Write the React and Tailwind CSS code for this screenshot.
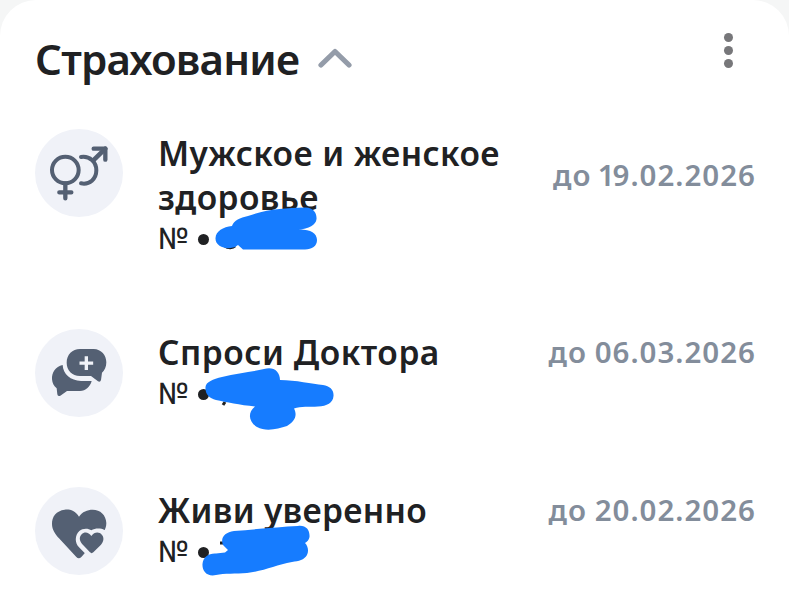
import React from "react";

function GenderIcon() {
  return (
    <svg viewBox="30 27 264 264" className="block size-[88px]" fill="none" stroke="#546073" strokeWidth="12" strokeLinecap="round" strokeLinejoin="round">
      <circle cx="121" cy="150" r="40" />
      <path d="M121 190V235M103 217H139" strokeWidth="13" />
      <path d="M168 111C194 107 214 126 214 151C214 177 194 195 168 190" />
      <path d="M205 121L241 86" strokeWidth="14" />
      <path d="M206 86H241V119" strokeWidth="13" />
    </svg>
  );
}

function ChatIcon() {
  return (
    <svg viewBox="30 27 264 264" className="block size-[88px]">
      <path d="M113 135C91 140 80 158 81 178C82 190 87 199 95 205L97 223Q98 231 106 227L126 213H165C182 213 196 199 200 183H168C137 182 114 162 113 135Z" fill="#546073" />
      <path d="M165 87H206C229 88 244 105 244 127C244 141 239 151 231 158L228 180Q226 187 219 184L198 168H165C141 168 125 150 125 128C125 104 142 87 165 87Z" fill="#546073" />
      <path d="M184 109V150M163.500 129.500H204.500" stroke="#f0f2f8" strokeWidth="10" />
    </svg>
  );
}

function HeartsIcon() {
  return (
    <svg viewBox="30 30 264 264" className="block size-[88px]">
      <path d="M162 119C150 100 133 96 119 98C94 101 80 119 81 141C81 157 90 171 102 184L154 240Q161 248 169 240L175 233L235 165C241 157 244 148 244 138C243 114 226 98 203 98C187 98 172 104 162 119Z" fill="#546073" />
      <path d="M199 160C190 153 173 153 163 162C149 176 149 197 162 211L182 231L199 247L244 208L256 159H238C228 153 210 153 199 160Z" fill="#f0f2f8" />
      <path d="M199 177C191 165 178 163 170 172C161 181 164 193 172 202L195 226Q200 231 205 226L228 203C236 194 238 182 231 174C222 163 208 165 199 177Z" fill="#546073" />
    </svg>
  );
}

const items = [
  {
    title: (
      <>
        <span className="block tracking-[0.420px]">Мужское и женское</span>
        <span className="block tracking-[0.400px]">здоровье</span>
      </>
    ),
    date: (
      <>
        <span className="[word-spacing:-2.500px]">до </span>
        <span className="tracking-[-2px]">1</span>9.02.2026
      </>
    ),
    Icon: GenderIcon,
    row: "h-[200px]",
    textPad: "pt-[2px]",
    datePad: "pt-[26px]",
    box: "0 129 400 140",
    mark: "M248 216C268 209 285 208 305 207.500C313 207 317 213 316.500 219C316 225 309 229 298 229.500C310 229 317 233 317 240C317 246 312 249.500 305 249.500H243L238 245L235 247C227 250 215 247 215.500 238C216 231 223 227 232 226C234 220 240 218 248 216Z",
    under: "M225 246C228 248.500 233 248 235 246",
  },
  {
    title: <span className="block tracking-[0.540px]">Спроси Доктора</span>,
    date: "до 06.03.2026",
    Icon: ChatIcon,
    row: "h-[158px]",
    textPad: "pt-px",
    datePad: "pt-[3px]",
    box: "0 329 400 140",
    mark: "M222 377C237 373 252 372 264 369C273 366 280 371 280 380C296 380 312 384 323 385C330 386 334 390 333.500 396C333 403 327 406 318 406.500C309 407 301 406 294 408.500C298 416 294 422 287 426C278 429 266 432 257 427C249 422 247 413 255 406.500C240 405 226 402 216 400C209 398 205 394 205.500 387C206 382 213 379 222 377Z",
    under: "M225 402L223 405",
  },
  {
    title: <span className="block tracking-[0.320px]">Живи уверенно</span>,
    date: "до 20.02.2026",
    Icon: HeartsIcon,
    row: "h-[113px]",
    textPad: "pt-px",
    datePad: "pt-[3px]",
    box: "0 487 400 140",
    mark: "M234 531C258 529 279 527 298 526C306 525 310 530 309.500 537C309 540 307 542 305 543C308 546 309 551 307 555C304 560 299 561 292 562C276 565 264 571 247 573C236 574 224 573 216 575C207 577 202 571 202.500 564C203 557 209 553 216 553.500L225 552.500L228 550L223 545C220 538 225 532 234 531Z",
    under: "M220 543H223",
  },
];

function InsuranceRow({ item }) {
  const { Icon } = item;
  return (
    <li className={"relative flex pl-[35px] pr-[33px] " + item.row}>
      <div className="size-[88px] shrink-0 rounded-full bg-[#f0f2f8]">
        <Icon />
      </div>
      <div className={"ml-[35px] flex-1 whitespace-nowrap " + item.textPad}>
        <h2 className="text-[33.5px] font-semibold leading-[44px]">{item.title}</h2>
        <p className="flex text-[30px] leading-[40px]">
          <span className="w-[30px] font-['Roboto','Noto_Sans',sans-serif]">№</span>
          <span className="ml-[10px] mt-[15px] size-[11px] rounded-full bg-[#202123]" />
        </p>
      </div>
      <div className={"whitespace-nowrap text-[29.5px] font-semibold leading-[39px] tracking-[1px] [word-spacing:-1px] text-[#838d9b] " + item.datePad}>{item.date}</div>
      <svg viewBox={item.box} className="pointer-events-none absolute left-0 top-0 h-[140px] w-[400px]">
        <path d={item.under} fill="none" stroke="#202123" strokeWidth="3" />
        <path d={item.mark} fill="#167cff" />
      </svg>
    </li>
  );
}

export default function App() {
  return (
    <div className="h-[600px] w-full overflow-hidden bg-[#f5f6f6] font-['Noto_Sans','Open_Sans',sans-serif] text-[#202123]">
      <main className="h-full overflow-hidden rounded-t-[36px] bg-white">
        <header className="flex h-[129px] items-start pl-[35px] pr-[56px] pt-[29px]">
          <h1 className="whitespace-nowrap text-[42px] font-semibold leading-[60px] tracking-[-0.760px]">Страхование</h1>
          <svg viewBox="0 0 34 24" className="ml-[19px] mt-[18px] h-[24px] w-[34px]" fill="none" stroke="#949ca9" strokeWidth="5.200" strokeLinecap="round" strokeLinejoin="round">
            <path d="M3 18L17 4.500L31 18" />
          </svg>
          <div className="ml-auto mt-[4px] flex flex-col gap-1">
            <span className="size-[9px] rounded-full bg-[#77777a]" />
            <span className="size-[9px] rounded-full bg-[#77777a]" />
            <span className="size-[9px] rounded-full bg-[#77777a]" />
          </div>
        </header>
        <ul>
          {items.map((item, i) => (
            <InsuranceRow key={i} item={item} />
          ))}
        </ul>
      </main>
    </div>
  );
}
